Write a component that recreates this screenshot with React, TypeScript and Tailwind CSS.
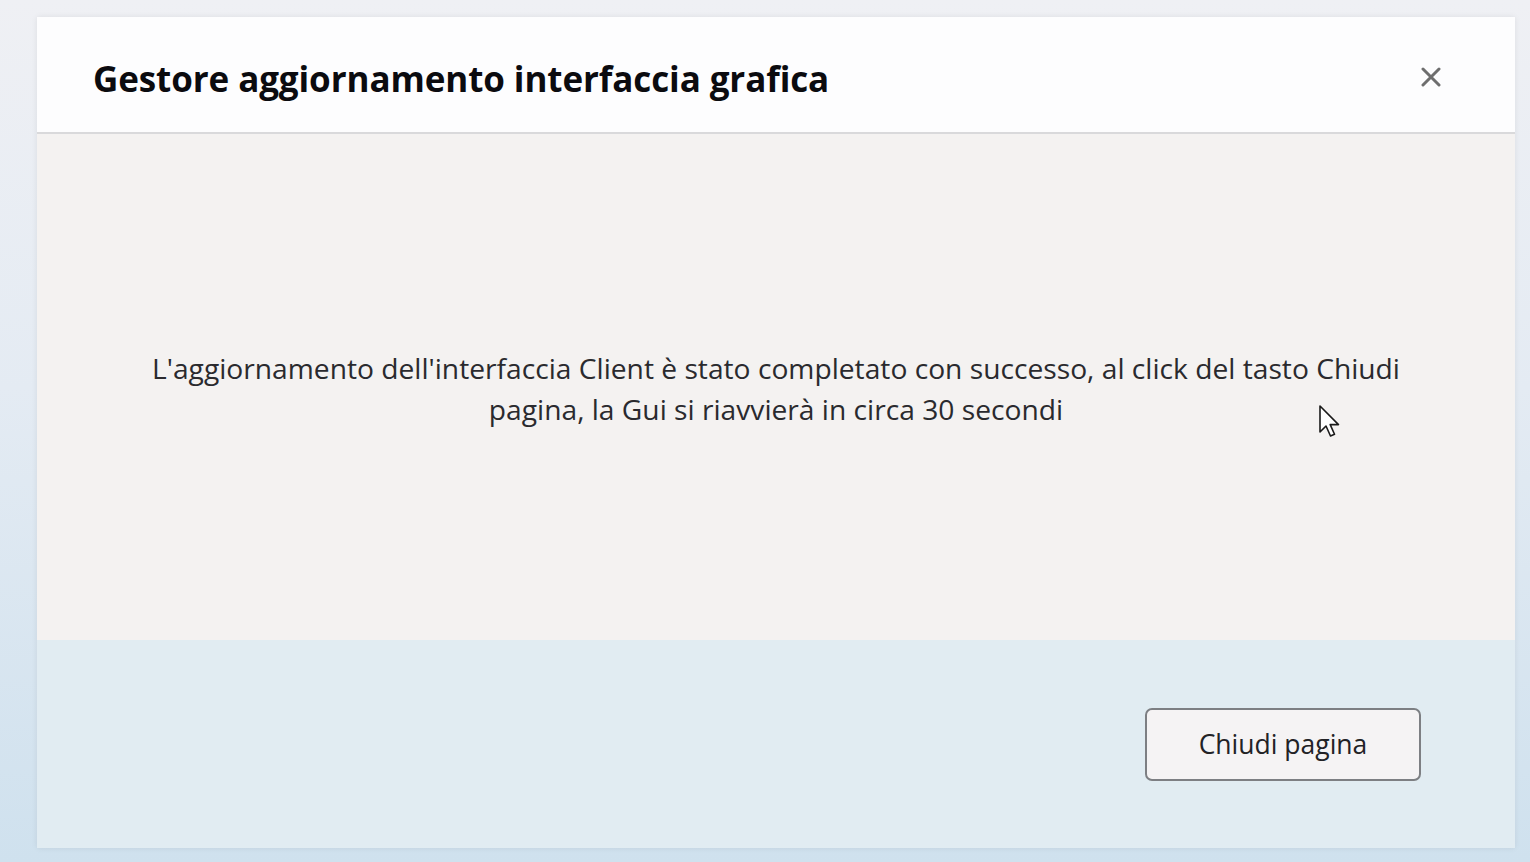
import React from "react";

export default function App() {
  return (
    <div
      className="relative w-[1530px] h-[862px] overflow-hidden bg-[linear-gradient(180deg,#eff0f4_0%,#e4ebf3_45%,#cfe1ee_100%)] pt-[17px] pl-[37px]"
      style={{ fontFamily: '"Open Sans", "Noto Sans", sans-serif' }}
    >
      <div className="flex flex-col w-[1478px] h-[831px] shadow-[0_0_6px_rgba(0,0,0,0.08)]">
        <div className="flex items-center justify-between h-[117px] bg-[#fdfdfe] border-b-2 border-[#d9d9db] pl-[56px] pr-[74px]">
          <h1 className="text-[35px] font-bold text-[#0b0b0f] tracking-[-0.1px] pt-[9px]">
            Gestore aggiornamento interfaccia grafica
          </h1>
          <button className="w-[20px] h-[20px] flex items-center justify-center mt-[4px]">
            <svg width="20" height="20" viewBox="0 0 20 20">
              <path d="M2 2 L18 18 M18 2 L2 18" stroke="#6e6e6e" strokeWidth="3" strokeLinecap="round" />
            </svg>
          </button>
        </div>
        <div className="flex items-center justify-center h-[506px] bg-[#f4f2f1]">
          <p className="text-center text-[28.2px] leading-[41px] text-[#2a2a2e] mt-[4px]">
            <span className="block">
              L'aggiornamento dell'interfaccia Client è stato completato con successo, al click del tasto Chiudi
            </span>
            <span className="block">pagina, la Gui si riavvierà in circa 30 secondi</span>
          </p>
        </div>
        <div className="flex flex-1 items-center justify-end bg-[#e1ecf2] pr-[94px]">
          <button className="w-[276px] h-[73px] rounded-[7px] border-2 border-[#7d7f83] bg-[#f5f3f4] text-[26.5px] text-[#222226] pt-[2px]">
            Chiudi pagina
          </button>
        </div>
      </div>
      <svg
        className="absolute left-[1318px] top-[404px]"
        width="26"
        height="38"
        viewBox="0 0 26 38"
      >
        <path
          d="M2 2 L2 28 L8 22 L12.5 32 L16.5 30.3 L12.2 20.6 L20.5 20.6 Z"
          fill="#ffffff"
          stroke="#1a1a1a"
          strokeWidth="1.6"
          strokeLinejoin="round"
        />
      </svg>
    </div>
  );
}
